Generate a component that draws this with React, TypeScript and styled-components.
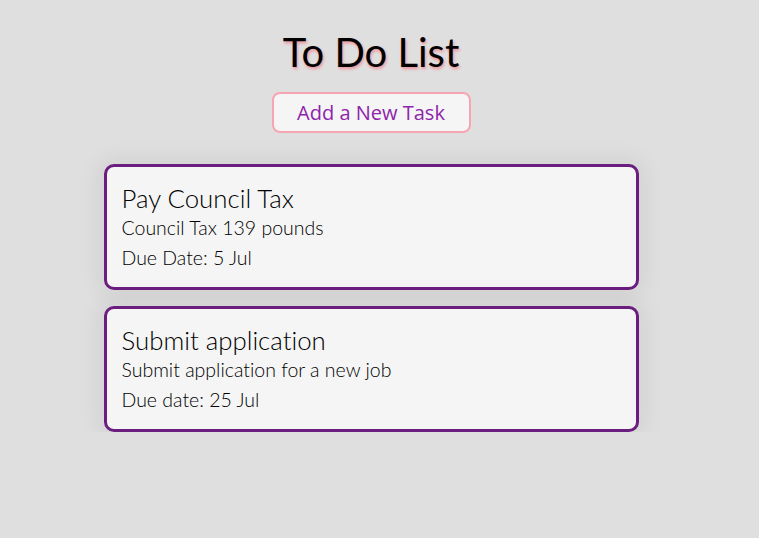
import React from 'react';
import styled, { createGlobalStyle } from 'styled-components';

const GlobalStyle = createGlobalStyle`
  html, body {
    margin: 0;
    padding: 0;
    background: #e0dfdf;
  }
  body {
    font-family: Lato, "Open Sans", sans-serif;
    font-variant-ligatures: none;
  }
`;

const Page = styled.main`
  width: 742px;
  display: flex;
  flex-direction: column;
  align-items: center;
  padding-top: 28px;
`;

const Title = styled.h1`
  margin: 0;
  font-family: Lato, sans-serif;
  font-weight: 400;
  font-size: 40px;
  line-height: 49px;
  color: #000;
  text-shadow: 1px 2px 3px rgba(240, 120, 130, 0.75);
`;

const AddButton = styled.button`
  margin-top: 15px;
  width: 199px;
  height: 41px;
  background: #f6f5f6;
  border: 2px solid #f7a4b4;
  border-radius: 8px;
  color: #8e24aa;
  font-family: "Open Sans", sans-serif;
  font-size: 20px;
  cursor: pointer;
`;

const List = styled.section`
  margin-top: 31px;
  width: 535px;
  display: flex;
  flex-direction: column;
  gap: 16px;
`;

const Card = styled.article`
  background: #f5f5f5;
  border: 3px solid #6b1d80;
  border-radius: 10px;
  padding: 16px 15px 18px;
  box-shadow: 0 0 22px 6px rgba(0, 0, 0, 0.06);
`;

const CardTitle = styled.h2`
  margin: 0 0 3px;
  font-family: Lato, sans-serif;
  font-weight: 300;
  font-size: 25.8px;
  line-height: 30px;
  color: #000;
`;

const CardText = styled.p<{ $last?: boolean }>`
  margin: 0 0 ${(p) => (p.$last ? 0 : 7)}px;
  font-family: Lato, sans-serif;
  font-weight: 300;
  font-size: 19.5px;
  line-height: 23px;
  color: #000;
`;

type Task = { title: string; description: string; due: string };

const tasks: Task[] = [
  { title: 'Pay Council Tax', description: 'Council Tax 139 pounds', due: 'Due Date: 5 Jul' },
  { title: 'Submit application', description: 'Submit application for a new job', due: 'Due date: 25 Jul' },
];

export default function App() {
  return (
    <>
      <GlobalStyle />
      <Page>
        <Title>To Do List</Title>
        <AddButton>Add a New Task</AddButton>
        <List>
          {tasks.map((task) => (
            <Card key={task.title}>
              <CardTitle>{task.title}</CardTitle>
              <CardText>{task.description}</CardText>
              <CardText $last>{task.due}</CardText>
            </Card>
          ))}
        </List>
      </Page>
    </>
  );
}
